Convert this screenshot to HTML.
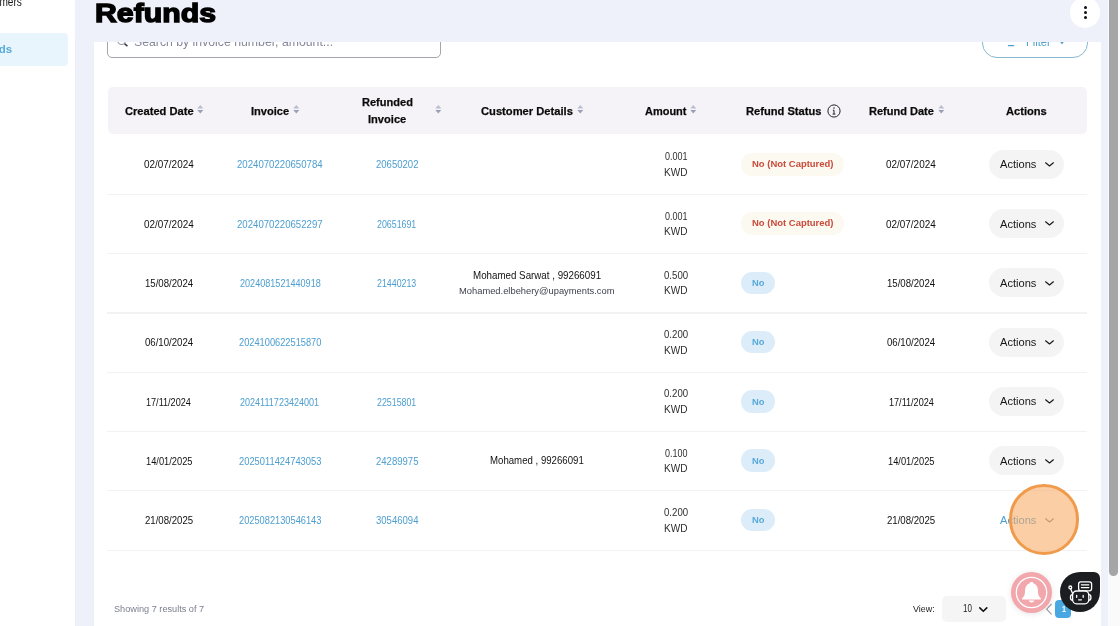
<!DOCTYPE html>
<html lang="en">
<head>
<meta charset="utf-8">
<title>Refunds</title>
<style>
*{box-sizing:border-box;margin:0;padding:0}
html,body{width:1120px;height:626px;overflow:hidden;background:#eef1f9;font-family:"Liberation Sans",sans-serif;color:#111}
#root{position:absolute;left:0;top:0;width:1120px;height:626px;overflow:hidden;will-change:transform;background:#eef1f9}
.abs{position:absolute}
.t{position:absolute;white-space:nowrap;transform-origin:0 50%;display:block}
#side{position:absolute;left:0;top:0;width:76.1px;height:626px;background:#fff;overflow:hidden;border-right:1px solid #eceef4}
#side .hl{position:absolute;left:-10px;top:32.7px;width:77.7px;height:33px;background:#e9f5fd;border-radius:4px}
#card{position:absolute;left:94.2px;top:0;width:1006.4px;height:626px;background:#fff}
#topbar{position:absolute;left:75.3px;top:0;width:1032.4px;height:41.7px;background:#eef1f9}
#kebab{position:absolute;left:1070.2px;top:-2.6px;width:30.2px;height:30.2px;border-radius:50%;background:#fff}
#kebab i{position:absolute;left:13.7px;width:3.2px;height:3.2px;border-radius:50%;background:#111}
#search{position:absolute;left:107.2px;top:17px;width:333.8px;height:40.6px;border:1px solid #a4a5ad;border-radius:5px;background:#fff}
#filter{position:absolute;left:981.5px;top:17px;width:106.4px;height:40.5px;border:1px solid #86b9d1;border-radius:15px;background:#fff}
#thead{position:absolute;left:107.5px;top:87px;width:979.7px;height:46.7px;background:#f5f3f8;border-radius:5px}
.hr{position:absolute;left:107.2px;width:980.3px;height:1.2px;background:#f2f2f5}
.act{position:absolute;left:988.9px;width:75.1px;height:29.2px;border-radius:15px;background:#f4f4f4}
.bad{position:absolute;left:741.1px;height:22.6px;border-radius:11.3px}
.bad.r{width:103px;background:#fcf9f1}
.bad.b{width:33.8px;background:#dcedf9}
#scroll{position:absolute;left:1107.7px;top:0;width:12.3px;height:626px;background:#fafafb}
#scroll i{position:absolute;left:1.3px;top:-10px;width:8.9px;height:585.6px;border-radius:4.4px;background:#a5a4a7}
</style>
</head>
<body>
<div id="root">

<div id="side">
<span class="t " style="left:-27.50px;top:-4.56px;font-size:12px;line-height:14px;color:#151515;transform:scaleX(0.8429);">Customers</span>
<div class="hl"></div>
<span class="t " style="left:-33.90px;top:42.12px;font-size:11.5px;line-height:14px;color:#56abdb;transform:scaleX(1.0000);font-weight:bold;">Refunds</span>
</div>
<div id="card"></div>
<div id="search"></div>
<svg class="abs" style="left:115px;top:34px" width="16" height="14" viewBox="115 34 16 14"><circle cx="121.6" cy="40.6" r="3.9" fill="none" stroke="#9799a6" stroke-width="1.1"/><path d="M125 44.2 L126.9 45.7" stroke="#35363c" stroke-width="1.6" stroke-linecap="round"/></svg>
<span class="t " style="left:133.90px;top:34.56px;font-size:12.8px;line-height:14px;color:#85879a;transform:scaleX(0.9583);">Search by invoice number, amount...</span>
<div id="filter"></div>
<svg class="abs" style="left:1006px;top:35px" width="10" height="12" viewBox="0 0 10 12"><path d="M0.5 1.5 H9.5 M1.4 6 H8.6 M2 10.7 H8.2" stroke="#4fa3d0" stroke-width="1.3" fill="none"/></svg>
<span class="t " style="left:1025.60px;top:34.93px;font-size:12.6px;line-height:14px;color:#4c9fcc;transform:scaleX(0.8857);">Filter</span>
<svg class="abs" style="left:1059.2px;top:40px" width="6" height="5" viewBox="0 0 6 5"><path d="M0 0 H6 L3 4.6 Z" fill="#4c9fcc"/></svg>
<div id="topbar"></div>
<span class="t " style="left:95.10px;top:5.62px;font-size:26.2px;line-height:14px;color:#000;transform:scaleX(1.1546);font-weight:bold;-webkit-text-stroke:1.4px #000;">Refunds</span>
<div id="kebab"><i style="top:8.7px"></i><i style="top:13.9px"></i><i style="top:18.7px"></i></div>
<div id="thead"></div>
<span class="t " style="left:124.60px;top:103.53px;font-size:11.6px;line-height:14px;color:#0a0a0a;transform:scaleX(0.9586);font-weight:bold;-webkit-text-stroke:0.25px #0a0a0a;">Created Date</span>
<svg class="abs" style="left:196.8px;top:105.1px" width="7" height="9" viewBox="0 0 7 9"><path d="M3.3 0.1 L6.3 3.6 H0.3 Z" fill="#b9bdce"/><path d="M3.3 8.6 L6.3 5.1 H0.3 Z" fill="#9aa0b6"/></svg>
<span class="t " style="left:250.90px;top:103.53px;font-size:11.6px;line-height:14px;color:#0a0a0a;transform:scaleX(0.9557);font-weight:bold;-webkit-text-stroke:0.25px #0a0a0a;">Invoice</span>
<svg class="abs" style="left:292.8px;top:105.1px" width="7" height="9" viewBox="0 0 7 9"><path d="M3.3 0.1 L6.3 3.6 H0.3 Z" fill="#b9bdce"/><path d="M3.3 8.6 L6.3 5.1 H0.3 Z" fill="#9aa0b6"/></svg>
<span class="t " style="left:362.00px;top:95.28px;font-size:11.6px;line-height:14px;color:#0a0a0a;transform:scaleX(0.9516);font-weight:bold;-webkit-text-stroke:0.25px #0a0a0a;">Refunded</span>
<span class="t " style="left:368.40px;top:111.88px;font-size:11.6px;line-height:14px;color:#0a0a0a;transform:scaleX(0.9582);font-weight:bold;-webkit-text-stroke:0.25px #0a0a0a;">Invoice</span>
<svg class="abs" style="left:434.9px;top:105.1px" width="7" height="9" viewBox="0 0 7 9"><path d="M3.3 0.1 L6.3 3.6 H0.3 Z" fill="#b9bdce"/><path d="M3.3 8.6 L6.3 5.1 H0.3 Z" fill="#9aa0b6"/></svg>
<span class="t " style="left:480.90px;top:103.53px;font-size:11.6px;line-height:14px;color:#0a0a0a;transform:scaleX(0.9633);font-weight:bold;-webkit-text-stroke:0.25px #0a0a0a;">Customer Details</span>
<svg class="abs" style="left:576.6px;top:105.1px" width="7" height="9" viewBox="0 0 7 9"><path d="M3.3 0.1 L6.3 3.6 H0.3 Z" fill="#b9bdce"/><path d="M3.3 8.6 L6.3 5.1 H0.3 Z" fill="#9aa0b6"/></svg>
<span class="t " style="left:645.20px;top:103.53px;font-size:11.6px;line-height:14px;color:#0a0a0a;transform:scaleX(0.9472);font-weight:bold;-webkit-text-stroke:0.25px #0a0a0a;">Amount</span>
<svg class="abs" style="left:690.3px;top:105.1px" width="7" height="9" viewBox="0 0 7 9"><path d="M3.3 0.1 L6.3 3.6 H0.3 Z" fill="#b9bdce"/><path d="M3.3 8.6 L6.3 5.1 H0.3 Z" fill="#9aa0b6"/></svg>
<span class="t " style="left:746.20px;top:103.53px;font-size:11.6px;line-height:14px;color:#0a0a0a;transform:scaleX(0.9590);font-weight:bold;-webkit-text-stroke:0.25px #0a0a0a;">Refund Status</span>
<svg class="abs" style="left:826.5px;top:103.7px" width="14" height="14" viewBox="0 0 14 14"><circle cx="7" cy="7" r="6.1" fill="none" stroke="#222" stroke-width="1"/><path d="M7 6.2 V10 M5.6 10.1 H8.4 M5.9 6.2 H7" stroke="#222" stroke-width="1" fill="none"/><circle cx="7" cy="4.1" r="0.75" fill="#222"/></svg>
<span class="t " style="left:868.90px;top:103.53px;font-size:11.6px;line-height:14px;color:#0a0a0a;transform:scaleX(0.9500);font-weight:bold;-webkit-text-stroke:0.25px #0a0a0a;">Refund Date</span>
<svg class="abs" style="left:937.6px;top:105.1px" width="7" height="9" viewBox="0 0 7 9"><path d="M3.3 0.1 L6.3 3.6 H0.3 Z" fill="#b9bdce"/><path d="M3.3 8.6 L6.3 5.1 H0.3 Z" fill="#9aa0b6"/></svg>
<span class="t " style="left:1006.00px;top:103.53px;font-size:11.6px;line-height:14px;color:#0a0a0a;transform:scaleX(0.9592);font-weight:bold;-webkit-text-stroke:0.25px #0a0a0a;">Actions</span>
<div class="hr" style="top:193.8px"></div>
<span class="t " style="left:143.89px;top:157.48px;font-size:10.6px;line-height:14px;color:#111;transform:scaleX(0.9372);">02/07/2024</span>
<span class="t " style="left:237.13px;top:157.48px;font-size:10.6px;line-height:14px;color:#4c9ed0;transform:scaleX(0.9079);">2024070220650784</span>
<span class="t " style="left:375.54px;top:157.48px;font-size:10.6px;line-height:14px;color:#4c9ed0;transform:scaleX(0.9016);">20650202</span>
<span class="t " style="left:664.80px;top:150.22px;font-size:10.2px;line-height:14px;color:#2e2e2e;transform:scaleX(0.8815);">0.001</span>
<span class="t " style="left:664.20px;top:165.70px;font-size:10.1px;line-height:14px;color:#2e2e2e;transform:scaleX(0.9973);">KWD</span>
<div class="bad r" style="top:153.1px"></div>
<span class="t " style="left:751.60px;top:157.09px;font-size:9.7px;line-height:14px;color:#c94b3c;transform:scaleX(0.9771);font-weight:bold;">No (Not Captured)</span>
<span class="t " style="left:886.14px;top:157.48px;font-size:10.6px;line-height:14px;color:#111;transform:scaleX(0.9372);">02/07/2024</span>
<div class="act" style="top:149.6px"></div>
<span class="t " style="left:999.90px;top:157.22px;font-size:11.2px;line-height:14px;color:#161616;transform:scaleX(0.9911);">Actions</span>
<svg class="abs" style="left:1044.2px;top:161.0px" width="11" height="7" viewBox="0 0 11 7"><path d="M1.6 1.8 L5.5 5.0 L9.4 1.8" fill="none" stroke="#1a1a1a" stroke-width="1.2" stroke-linecap="round" stroke-linejoin="round"/></svg>
<div class="hr" style="top:253.1px"></div>
<span class="t " style="left:143.89px;top:216.78px;font-size:10.6px;line-height:14px;color:#111;transform:scaleX(0.9372);">02/07/2024</span>
<span class="t " style="left:237.13px;top:216.78px;font-size:10.6px;line-height:14px;color:#4c9ed0;transform:scaleX(0.9079);">2024070220652297</span>
<span class="t " style="left:377.15px;top:216.78px;font-size:10.6px;line-height:14px;color:#4c9ed0;transform:scaleX(0.8333);">20651691</span>
<span class="t " style="left:664.80px;top:209.52px;font-size:10.2px;line-height:14px;color:#2e2e2e;transform:scaleX(0.8815);">0.001</span>
<span class="t " style="left:664.20px;top:225.00px;font-size:10.1px;line-height:14px;color:#2e2e2e;transform:scaleX(0.9973);">KWD</span>
<div class="bad r" style="top:212.4px"></div>
<span class="t " style="left:751.60px;top:216.39px;font-size:9.7px;line-height:14px;color:#c94b3c;transform:scaleX(0.9771);font-weight:bold;">No (Not Captured)</span>
<span class="t " style="left:886.14px;top:216.78px;font-size:10.6px;line-height:14px;color:#111;transform:scaleX(0.9372);">02/07/2024</span>
<div class="act" style="top:208.9px"></div>
<span class="t " style="left:999.90px;top:216.52px;font-size:11.2px;line-height:14px;color:#161616;transform:scaleX(0.9911);">Actions</span>
<svg class="abs" style="left:1044.2px;top:220.3px" width="11" height="7" viewBox="0 0 11 7"><path d="M1.6 1.8 L5.5 5.0 L9.4 1.8" fill="none" stroke="#1a1a1a" stroke-width="1.2" stroke-linecap="round" stroke-linejoin="round"/></svg>
<div class="hr" style="top:312.4px"></div>
<span class="t " style="left:144.69px;top:276.08px;font-size:10.6px;line-height:14px;color:#111;transform:scaleX(0.9068);">15/08/2024</span>
<span class="t " style="left:239.54px;top:276.08px;font-size:10.6px;line-height:14px;color:#4c9ed0;transform:scaleX(0.8567);">2024081521440918</span>
<span class="t " style="left:377.15px;top:276.08px;font-size:10.6px;line-height:14px;color:#4c9ed0;transform:scaleX(0.8333);">21440213</span>
<span class="t " style="left:473.00px;top:269.23px;font-size:10.3px;line-height:14px;color:#111;transform:scaleX(0.9480);">Mohamed Sarwat , 99266091</span>
<span class="t " style="left:458.80px;top:284.27px;font-size:9.9px;line-height:14px;color:#3b3e4c;transform:scaleX(0.9467);">Mohamed.elbehery@upayments.com</span>
<span class="t " style="left:664.00px;top:268.82px;font-size:10.2px;line-height:14px;color:#2e2e2e;transform:scaleX(0.9446);">0.500</span>
<span class="t " style="left:664.20px;top:284.30px;font-size:10.1px;line-height:14px;color:#2e2e2e;transform:scaleX(0.9973);">KWD</span>
<div class="bad b" style="top:271.5px"></div>
<span class="t " style="left:751.80px;top:276.17px;font-size:9.9px;line-height:14px;color:#58a9d9;transform:scaleX(0.9472);font-weight:bold;">No</span>
<span class="t " style="left:886.95px;top:276.08px;font-size:10.6px;line-height:14px;color:#111;transform:scaleX(0.9068);">15/08/2024</span>
<div class="act" style="top:268.2px"></div>
<span class="t " style="left:999.90px;top:275.82px;font-size:11.2px;line-height:14px;color:#161616;transform:scaleX(0.9911);">Actions</span>
<svg class="abs" style="left:1044.2px;top:279.6px" width="11" height="7" viewBox="0 0 11 7"><path d="M1.6 1.8 L5.5 5.0 L9.4 1.8" fill="none" stroke="#1a1a1a" stroke-width="1.2" stroke-linecap="round" stroke-linejoin="round"/></svg>
<div class="hr" style="top:371.7px"></div>
<span class="t " style="left:144.69px;top:335.38px;font-size:10.6px;line-height:14px;color:#111;transform:scaleX(0.9068);">06/10/2024</span>
<span class="t " style="left:238.74px;top:335.38px;font-size:10.6px;line-height:14px;color:#4c9ed0;transform:scaleX(0.8738);">2024100622515870</span>
<span class="t " style="left:664.00px;top:328.12px;font-size:10.2px;line-height:14px;color:#2e2e2e;transform:scaleX(0.9446);">0.200</span>
<span class="t " style="left:664.20px;top:343.60px;font-size:10.1px;line-height:14px;color:#2e2e2e;transform:scaleX(0.9973);">KWD</span>
<div class="bad b" style="top:330.8px"></div>
<span class="t " style="left:751.80px;top:335.47px;font-size:9.9px;line-height:14px;color:#58a9d9;transform:scaleX(0.9472);font-weight:bold;">No</span>
<span class="t " style="left:886.95px;top:335.38px;font-size:10.6px;line-height:14px;color:#111;transform:scaleX(0.9068);">06/10/2024</span>
<div class="act" style="top:327.5px"></div>
<span class="t " style="left:999.90px;top:335.12px;font-size:11.2px;line-height:14px;color:#161616;transform:scaleX(0.9911);">Actions</span>
<svg class="abs" style="left:1044.2px;top:338.9px" width="11" height="7" viewBox="0 0 11 7"><path d="M1.6 1.8 L5.5 5.0 L9.4 1.8" fill="none" stroke="#1a1a1a" stroke-width="1.2" stroke-linecap="round" stroke-linejoin="round"/></svg>
<div class="hr" style="top:431.0px"></div>
<span class="t " style="left:146.31px;top:394.68px;font-size:10.6px;line-height:14px;color:#111;transform:scaleX(0.8589);">17/11/2024</span>
<span class="t " style="left:240.35px;top:394.68px;font-size:10.6px;line-height:14px;color:#4c9ed0;transform:scaleX(0.8539);">2024111723424001</span>
<span class="t " style="left:377.15px;top:394.68px;font-size:10.6px;line-height:14px;color:#4c9ed0;transform:scaleX(0.8333);">22515801</span>
<span class="t " style="left:664.00px;top:387.42px;font-size:10.2px;line-height:14px;color:#2e2e2e;transform:scaleX(0.9446);">0.200</span>
<span class="t " style="left:664.20px;top:402.90px;font-size:10.1px;line-height:14px;color:#2e2e2e;transform:scaleX(0.9973);">KWD</span>
<div class="bad b" style="top:390.1px"></div>
<span class="t " style="left:751.80px;top:394.77px;font-size:9.9px;line-height:14px;color:#58a9d9;transform:scaleX(0.9472);font-weight:bold;">No</span>
<span class="t " style="left:888.55px;top:394.68px;font-size:10.6px;line-height:14px;color:#111;transform:scaleX(0.8589);">17/11/2024</span>
<div class="act" style="top:386.8px"></div>
<span class="t " style="left:999.90px;top:394.42px;font-size:11.2px;line-height:14px;color:#161616;transform:scaleX(0.9911);">Actions</span>
<svg class="abs" style="left:1044.2px;top:398.2px" width="11" height="7" viewBox="0 0 11 7"><path d="M1.6 1.8 L5.5 5.0 L9.4 1.8" fill="none" stroke="#1a1a1a" stroke-width="1.2" stroke-linecap="round" stroke-linejoin="round"/></svg>
<div class="hr" style="top:490.3px"></div>
<span class="t " style="left:145.50px;top:453.98px;font-size:10.6px;line-height:14px;color:#111;transform:scaleX(0.8765);">14/01/2025</span>
<span class="t " style="left:238.74px;top:453.98px;font-size:10.6px;line-height:14px;color:#4c9ed0;transform:scaleX(0.8811);">2025011424743053</span>
<span class="t " style="left:375.54px;top:453.98px;font-size:10.6px;line-height:14px;color:#4c9ed0;transform:scaleX(0.9016);">24289975</span>
<span class="t " style="left:489.90px;top:454.33px;font-size:10.3px;line-height:14px;color:#111;transform:scaleX(0.9360);">Mohamed , 99266091</span>
<span class="t " style="left:664.80px;top:446.72px;font-size:10.2px;line-height:14px;color:#2e2e2e;transform:scaleX(0.8815);">0.100</span>
<span class="t " style="left:664.20px;top:462.20px;font-size:10.1px;line-height:14px;color:#2e2e2e;transform:scaleX(0.9973);">KWD</span>
<div class="bad b" style="top:449.4px"></div>
<span class="t " style="left:751.80px;top:454.07px;font-size:9.9px;line-height:14px;color:#58a9d9;transform:scaleX(0.9472);font-weight:bold;">No</span>
<span class="t " style="left:887.75px;top:453.98px;font-size:10.6px;line-height:14px;color:#111;transform:scaleX(0.8765);">14/01/2025</span>
<div class="act" style="top:446.1px"></div>
<span class="t " style="left:999.90px;top:453.72px;font-size:11.2px;line-height:14px;color:#161616;transform:scaleX(0.9911);">Actions</span>
<svg class="abs" style="left:1044.2px;top:457.5px" width="11" height="7" viewBox="0 0 11 7"><path d="M1.6 1.8 L5.5 5.0 L9.4 1.8" fill="none" stroke="#1a1a1a" stroke-width="1.2" stroke-linecap="round" stroke-linejoin="round"/></svg>
<div class="hr" style="top:549.6px"></div>
<span class="t " style="left:144.69px;top:513.28px;font-size:10.6px;line-height:14px;color:#111;transform:scaleX(0.9068);">21/08/2025</span>
<span class="t " style="left:238.74px;top:513.28px;font-size:10.6px;line-height:14px;color:#4c9ed0;transform:scaleX(0.8738);">2025082130546143</span>
<span class="t " style="left:375.54px;top:513.28px;font-size:10.6px;line-height:14px;color:#4c9ed0;transform:scaleX(0.9016);">30546094</span>
<span class="t " style="left:664.00px;top:506.02px;font-size:10.2px;line-height:14px;color:#2e2e2e;transform:scaleX(0.9446);">0.200</span>
<span class="t " style="left:664.20px;top:521.50px;font-size:10.1px;line-height:14px;color:#2e2e2e;transform:scaleX(0.9973);">KWD</span>
<div class="bad b" style="top:508.7px"></div>
<span class="t " style="left:751.80px;top:513.37px;font-size:9.9px;line-height:14px;color:#58a9d9;transform:scaleX(0.9472);font-weight:bold;">No</span>
<span class="t " style="left:886.95px;top:513.28px;font-size:10.6px;line-height:14px;color:#111;transform:scaleX(0.9068);">21/08/2025</span>
<span class="t " style="left:999.90px;top:513.02px;font-size:11.2px;line-height:14px;color:#4c9ed0;transform:scaleX(0.9911);">Actions</span>
<svg class="abs" style="left:1044.2px;top:516.8px" width="11" height="7" viewBox="0 0 11 7"><path d="M1.6 1.8 L5.5 5.0 L9.4 1.8" fill="none" stroke="#8a8a8a" stroke-width="1.2" stroke-linecap="round" stroke-linejoin="round"/></svg>
<span class="t " style="left:113.80px;top:601.97px;font-size:9.6px;line-height:14px;color:#7c7f8e;transform:scaleX(0.9550);">Showing 7 results of 7</span>
<span class="t " style="left:913.10px;top:601.54px;font-size:9.4px;line-height:14px;color:#1b1b1b;transform:scaleX(0.9511);">View:</span>
<div class="abs" style="left:942px;top:595.7px;width:64.3px;height:26.3px;border-radius:5px;background:#f5f5f5"></div>
<span class="t " style="left:962.60px;top:601.53px;font-size:10px;line-height:14px;color:#1b1b1b;transform:scaleX(0.8001);">10</span>
<svg class="abs" style="left:977.5px;top:605.5px" width="11" height="8" viewBox="0 0 11 8"><path d="M1.8 1.9 L5.3 5.3 L8.8 1.9" fill="none" stroke="#111" stroke-width="1.6" stroke-linecap="round" stroke-linejoin="round"/></svg>
<svg class="abs" style="left:1044px;top:602px" width="10" height="14" viewBox="0 0 10 14"><path d="M7.6 2 L2.6 7.2 L7.6 12.3" fill="none" stroke="#9a9a9a" stroke-width="1.1"/></svg>
<div class="abs" style="left:1055px;top:599.5px;width:15.5px;height:18.5px;border-radius:4px;background:#49a8e2"></div>
<span class="t " style="left:1062.30px;top:601.68px;font-size:9px;line-height:14px;color:#fff;transform:scaleX(0.7991);font-weight:bold;">1</span>
<div class="abs" style="left:1008.7px;top:484.3px;width:70.8px;height:70.8px;border-radius:50%;background:rgba(248,168,97,0.56);border:3.2px solid #f09a4b"></div>
<div class="abs" style="left:1011.1px;top:572.3px;width:40.7px;height:40.7px;border-radius:50%;background:#f2a7ad;box-shadow:0 1px 6px rgba(0,0,0,.10)"></div>
<svg class="abs" style="left:1011.1px;top:572.3px" width="41" height="41" viewBox="0 0 40.7 40.7"><circle cx="20.35" cy="20.35" r="15.1" fill="none" stroke="#fff" stroke-width="1.3"/><path d="M20.35 9.7 c-1.1 0 -1.7 .8 -1.7 1.5 c-3.1 .9 -4.7 3.700 -4.7 7.1 c0 4.400 -1.100 6.200 -2.900 7.800 c-.4 .4 -.2 1.100 .5 1.100 h17.600 c.7 0 .9 -.7 .5 -1.100 c-1.800 -1.600 -2.900 -3.400 -2.900 -7.800 c0 -3.400 -1.600 -6.200 -4.700 -7.100 c0 -.7 -.6 -1.500 -1.700 -1.500 z" fill="#fff"/><path d="M17.6 28.2 a2.8 2.6 0 0 0 5.5 0 z" fill="#fff"/></svg>
<div class="abs" style="left:1060px;top:571.8px;width:40px;height:40.6px;border-radius:20px 6px 20px 20px;background:#1c1d21"></div>
<svg class="abs" style="left:1060px;top:571.8px" width="40" height="41" viewBox="0 0 40 40.6" fill="none" stroke="#fff" stroke-width="1.3" stroke-linecap="round" stroke-linejoin="round"><rect x="18.6" y="9.6" width="13" height="9" rx="2.2" fill="#1c1d21"/><path d="M21.4 12.6 H28.8 M21.4 15.4 H28.8"/><rect x="12.6" y="18.8" width="16.2" height="12.8" rx="4" fill="#1c1d21"/><path d="M12.4 22.5 c-2.6 0 -2.6 5.4 0 5.4 M29 22.500 c2.600 0 2.600 5.400 0 5.400"/><circle cx="10.3" cy="15.2" r="1.4"/><path d="M10.7 16.8 L12.6 21.2"/><path d="M16.7 23.3 V25.1 M23.2 23.3 V25.1 M18.6 27.6 H21.4"/></svg>
<div id="scroll"><i></i></div>
</div>
</body>
</html>
